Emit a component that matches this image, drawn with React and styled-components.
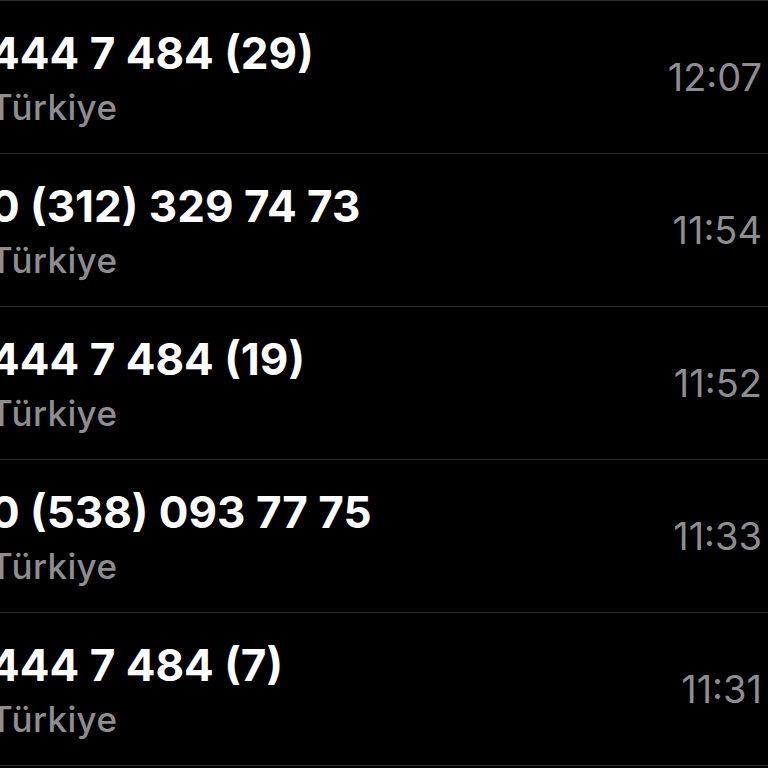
import React from 'react'
import styled, { createGlobalStyle } from 'styled-components'

const GlobalStyle = createGlobalStyle`
    html, body {
        margin: 0;
        padding: 0;
        background: #000;
    }
    body {
        font-family: Inter, "Noto Sans", "Liberation Sans", sans-serif;
        overflow: hidden;
    }
`

const calls = [
    { number: '444 7 484 (29)', place: 'Türkiye', time: '12:07' },
    { number: '0 (312) 329 74 73', place: 'Türkiye', time: '11:54' },
    { number: '444 7 484 (19)', place: 'Türkiye', time: '11:52' },
    { number: '0 (538) 093 77 75', place: 'Türkiye', time: '11:33' },
    { number: '444 7 484 (7)', place: 'Türkiye', time: '11:31' },
]

function App() {
    return (
        <>
            <GlobalStyle />
            <List>
                {calls.map((c, i) => (
                    <Row key={i}>
                        <Info>
                            <Number>{c.number}</Number>
                            <Place>{c.place}</Place>
                        </Info>
                        <Time>{c.time}</Time>
                    </Row>
                ))}
            </List>
        </>
    )
}

export default App

const List = styled.div`
    width: 768px;
    height: 768px;
    background: #000;
    border-top: 1px solid #2c2c2e;
    box-sizing: border-box;
    overflow: hidden;
`

const Row = styled.div`
    height: 152px;
    border-bottom: 1px solid #2c2c2e;
    display: flex;
    align-items: center;
    justify-content: space-between;
    padding-right: 6px;
`

// the screenshot is cropped, so the first letters run off the left edge
const Info = styled.div`
    display: flex;
    flex-direction: column;
    margin-left: -10px;
    padding-top: 4px;
    gap: 12px;
`

const Number = styled.div`
    color: #fff;
    font-size: 44px;
    font-weight: 700;
    line-height: 44px;
    white-space: nowrap;
`

const Place = styled.div`
    color: #8d8d92;
    font-size: 35px;
    font-weight: 500;
    letter-spacing: 0.4px;
    line-height: 40px;
`

const Time = styled.div`
    color: #8d8d92;
    font-size: 38px;
    font-weight: 400;
    line-height: 44px;
`
